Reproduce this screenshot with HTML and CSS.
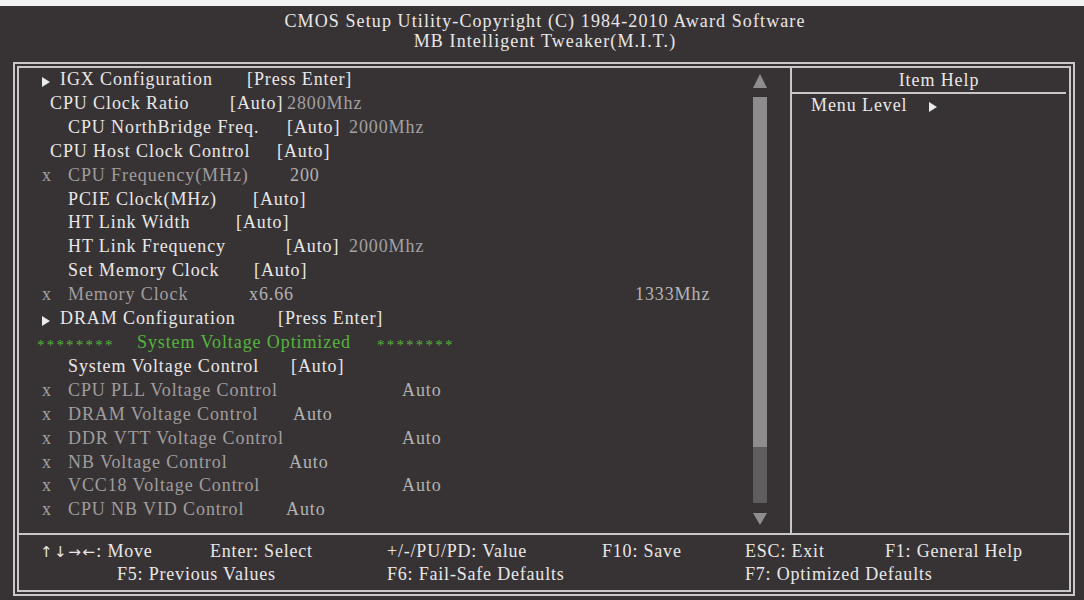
FILE: index.html
```html
<!DOCTYPE html>
<html>
<head>
<meta charset="utf-8">
<title>CMOS Setup Utility</title>
<link rel="stylesheet" href="styles.css">
</head>
<body>
<div class="screen">
  <header class="title">
    <div>CMOS Setup Utility-Copyright (C) 1984-2010 Award Software</div>
    <div>MB Intelligent Tweaker(M.I.T.)</div>
  </header>
  <div class="frame">
    <div class="main">
      <div class="menu">
        <div class="rows">
          <div class="row"><span class="mk mk-a"><i class="arr"></i></span><span class="lbl" style="--w:187px">IGX Configuration</span><span class="val">[Press Enter]</span></div>
          <div class="row"><span class="mk mk-n"></span><span class="lbl" style="--w:180px">CPU Clock Ratio</span><span class="val" style="--w:57px">[Auto]</span><span class="ext">2800Mhz</span></div>
          <div class="row"><span class="mk"></span><span class="lbl" style="--w:219px">CPU NorthBridge Freq.</span><span class="val" style="--w:62px">[Auto]</span><span class="ext">2000Mhz</span></div>
          <div class="row"><span class="mk mk-n"></span><span class="lbl" style="--w:227px">CPU Host Clock Control</span><span class="val">[Auto]</span></div>
          <div class="row off"><span class="mk">x</span><span class="lbl" style="--w:222px">CPU Frequency(MHz)</span><span class="val">200</span></div>
          <div class="row"><span class="mk"></span><span class="lbl" style="--w:185px">PCIE Clock(MHz)</span><span class="val">[Auto]</span></div>
          <div class="row"><span class="mk"></span><span class="lbl" style="--w:168px">HT Link Width</span><span class="val">[Auto]</span></div>
          <div class="row"><span class="mk"></span><span class="lbl" style="--w:218px">HT Link Frequency</span><span class="val" style="--w:63px">[Auto]</span><span class="ext">2000Mhz</span></div>
          <div class="row"><span class="mk"></span><span class="lbl" style="--w:186px">Set Memory Clock</span><span class="val">[Auto]</span></div>
          <div class="row off"><span class="mk">x</span><span class="lbl" style="--w:181px">Memory Clock</span><span class="val" style="--w:386px">x6.66</span><span class="ext light">1333Mhz</span></div>
          <div class="row"><span class="mk mk-a"><i class="arr"></i></span><span class="lbl" style="--w:218px">DRAM Configuration</span><span class="val">[Press Enter]</span></div>
          <div class="row opt"><span class="stars">********</span><span class="opt-t">System Voltage Optimized</span><span class="stars">********</span></div>
          <div class="row"><span class="mk"></span><span class="lbl" style="--w:223px">System Voltage Control</span><span class="val">[Auto]</span></div>
          <div class="row off"><span class="mk">x</span><span class="lbl" style="--w:334px">CPU PLL Voltage Control</span><span class="val">Auto</span></div>
          <div class="row off"><span class="mk">x</span><span class="lbl" style="--w:225px">DRAM Voltage Control</span><span class="val">Auto</span></div>
          <div class="row off"><span class="mk">x</span><span class="lbl" style="--w:334px">DDR VTT Voltage Control</span><span class="val">Auto</span></div>
          <div class="row off"><span class="mk">x</span><span class="lbl" style="--w:221px">NB Voltage Control</span><span class="val">Auto</span></div>
          <div class="row off"><span class="mk">x</span><span class="lbl" style="--w:334px">VCC18 Voltage Control</span><span class="val">Auto</span></div>
          <div class="row off"><span class="mk">x</span><span class="lbl" style="--w:218px">CPU NB VID Control</span><span class="val">Auto</span></div>
        </div>
        <div class="scroll">
          <div class="up"></div>
          <div class="track"><div class="thumb"></div></div>
          <div class="down"></div>
        </div>
      </div>
      <aside class="help">
        <div class="help-head">Item Help</div>
        <div class="help-body">Menu Level<i class="tri"></i></div>
      </aside>
    </div>
    <footer class="keys">
      <span class="k c1"><span class="arrows">↑↓→←</span>: Move</span>
      <span class="k c3">Enter: Select</span>
      <span class="k c4a">+/-/PU/PD: Value</span>
      <span class="k c5">F10: Save</span>
      <span class="k c6a">ESC: Exit</span>
      <span class="k c7">F1: General Help</span>
      <span class="k c2">F5: Previous Values</span>
      <span class="k c4b">F6: Fail-Safe Defaults</span>
      <span class="k c6b">F7: Optimized Defaults</span>
    </footer>
  </div>
</div>
</body>
</html>
```

FILE: styles.css
```css
html, body {
  margin: 0;
  padding: 0;
}

body {
  background: #373334;
  color: #e9e7e8;
  font-family: "Liberation Serif", "Times New Roman", serif;
  font-size: 18px;
}

.screen {
  width: 1084px;
  height: 600px;
  box-sizing: border-box;
  border-top: 6px solid #f2f2f2;
  overflow: hidden;
}

.title {
  height: 56px;
  box-sizing: border-box;
  padding-top: 5px;
  padding-left: 6px;
  text-align: center;
  line-height: 20px;
  letter-spacing: 1.1px;
  white-space: nowrap;
}

.frame {
  margin-left: 13px;
  width: 1062px;
  height: 534px;
  box-sizing: border-box;
  border: 6px double #c9c7c8;
  display: flex;
  flex-direction: column;
}

.main {
  height: 465px;
  display: flex;
  border-bottom: 2px solid #c9c7c8;
}

.menu {
  width: 771px;
  display: flex;
  border-right: 2px solid #c9c7c8;
}

.rows {
  flex: 1;
  padding-left: 23px;
  line-height: 23.9px;
  letter-spacing: 0.9px;
}

.row {
  display: flex;
  white-space: nowrap;
}

.row > span {
  flex: none;
  width: var(--w, auto);
}

.row > .mk {
  width: 26px;
  color: #a3a0a1;
}

.row > .mk-a {
  width: 18px;
}

.row > .mk-n {
  width: 8px;
}

.arr {
  display: inline-block;
  width: 0;
  height: 0;
  border-left: 8px solid #ecebeb;
  border-top: 5.5px solid transparent;
  border-bottom: 5.5px solid transparent;
  vertical-align: -2px;
}

.ext {
  color: #a3a0a1;
}

.ext.light {
  color: #b6b4b5;
}

.off .lbl {
  color: #a09d9e;
}

.off .val {
  color: #b3b1b2;
}

.opt {
  margin-left: -5px;
  color: #55b43c;
}

.row > .stars {
  width: 100px;
  font-size: 15px;
  letter-spacing: 2.2px;
  position: relative;
  top: 3px;
}

.row > .opt-t {
  width: 240px;
}

.scroll {
  width: 14px;
  margin-right: 23px;
  padding-top: 6px;
  display: flex;
  flex-direction: column;
}

.up {
  width: 0;
  height: 0;
  border-left: 7px solid transparent;
  border-right: 7px solid transparent;
  border-bottom: 14px solid #8f8d8e;
}

.track {
  margin-top: 9px;
  height: 406px;
  background: #5f5d5e;
}

.thumb {
  height: 350px;
  background: #8e8c8d;
}

.down {
  margin-top: 10px;
  width: 0;
  height: 0;
  border-left: 7px solid transparent;
  border-right: 7px solid transparent;
  border-top: 12px solid #8f8d8e;
}

.help {
  flex: 1;
  letter-spacing: 0.9px;
}

.help-head {
  height: 24px;
  line-height: 24px;
  margin-right: 3px;
  padding-left: 20px;
  text-align: center;
  border-bottom: 2px solid #c9c7c8;
}

.help-body {
  padding-left: 19px;
  line-height: 22px;
  white-space: nowrap;
}

.tri {
  display: inline-block;
  width: 0;
  height: 0;
  margin-left: 22px;
  border-left: 8px solid #ecebeb;
  border-top: 5.5px solid transparent;
  border-bottom: 5.5px solid transparent;
  vertical-align: -1px;
}

.keys {
  flex: 1;
  box-sizing: border-box;
  padding-top: 5px;
  padding-left: 21px;
  display: grid;
  grid-template-columns: 77px 93px 177px 215px 143px 140px 1fr;
  grid-template-rows: 23px 23px;
  line-height: 23px;
  letter-spacing: 0.8px;
  white-space: nowrap;
}

.arrows {
  font-family: "DejaVu Sans", sans-serif;
  font-size: 15px;
  letter-spacing: 1.5px;
}

.k.c1 { grid-column: 1 / span 2; grid-row: 1; }
.k.c3 { grid-column: 3; grid-row: 1; }
.k.c4a { grid-column: 4; grid-row: 1; }
.k.c5 { grid-column: 5; grid-row: 1; }
.k.c6a { grid-column: 6; grid-row: 1; }
.k.c7 { grid-column: 7; grid-row: 1; }
.k.c2 { grid-column: 2 / span 2; grid-row: 2; }
.k.c4b { grid-column: 4; grid-row: 2; }
.k.c6b { grid-column: 6 / span 2; grid-row: 2; }
```
